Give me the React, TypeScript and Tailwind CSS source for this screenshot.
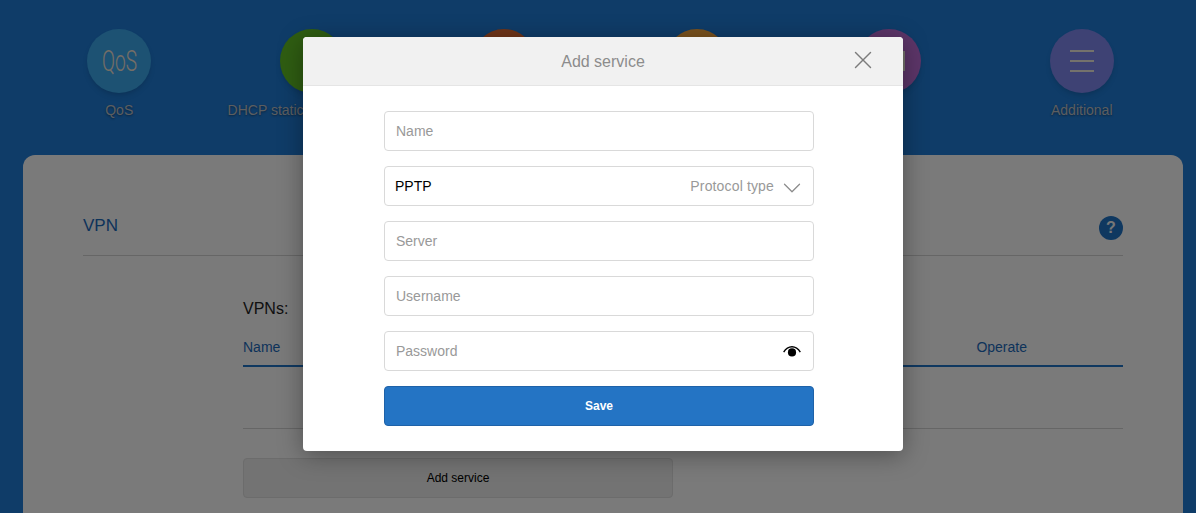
import { ChevronDown, X } from "lucide-react";

const font = "font-['Liberation_Sans',Arial,sans-serif]";

type NavItem = {
  label: string;
  color: string;
  icon?: React.ReactNode;
};

const navItems: NavItem[] = [
  {
    label: "QoS",
    color: "bg-[#3aa4e6]",
    icon: <span className="font-['Roboto',sans-serif] text-[29px] leading-none font-light text-[#e8dccc] scale-x-[0.66]">QoS</span>,
  },
  { label: "DHCP static IP assignment", color: "bg-[#5eba24]" },
  { label: "", color: "bg-[#de6830]" },
  { label: "", color: "bg-[#f4a43c]" },
  {
    label: "",
    color: "bg-[#b86ad0]",
    icon: <span className="h-5 w-8 border-2 border-[#e8e4d8]" />,
  },
  {
    label: "Additional",
    color: "bg-[#7c84e8]",
    icon: (
      <span className="flex w-6 flex-col gap-2">
        <span className="h-0.5 bg-[#e8e4d8]" />
        <span className="h-0.5 bg-[#e8e4d8]" />
        <span className="h-0.5 bg-[#e8e4d8]" />
      </span>
    ),
  },
];

function Field({ placeholder, children }: { placeholder: string; children?: React.ReactNode }) {
  return (
    <div className="flex h-10 items-center justify-between rounded border border-[#d9d9d9] bg-white pl-[11px] pr-[11px] text-sm text-[#999]">
      <span>{placeholder}</span>
      {children}
    </div>
  );
}

export default function App() {
  return (
    <div className={`relative h-[513px] w-[1196px] overflow-hidden bg-[#1e78d0] ${font}`}>
      <div className="grid w-[1178px] grid-cols-6 pl-[23px] pt-[29px]">
        {navItems.map((item, i) => (
          <div key={i} className="flex flex-col items-center">
            <div className={`flex h-16 w-16 items-center justify-center rounded-full shadow-md ${item.color}`}>
              {item.icon}
            </div>
            <span className="mt-[7px] h-5 text-sm whitespace-nowrap text-[#b8bcc0] [text-shadow:0_1px_2px_rgba(0,0,0,0.4)]">
              {item.label}
            </span>
          </div>
        ))}
      </div>

      <div className="ml-[23px] mt-[35px] h-[400px] w-[1160px] rounded-t-xl bg-[#f4f4f4] px-[60px]">
        <div className="flex h-[101px] justify-between border-b border-[#ccc] pt-[40px]">
          <h2 className="mt-[20px] text-[17px] leading-[22px] text-[#1a66b4]">VPN</h2>
          <span className="mt-[21px] flex h-6 w-6 items-center justify-center rounded-full bg-[#1e70c0] text-base font-bold text-[#eee]">?</span>
        </div>
        <div className="ml-[160px]">
          <p className="pt-[43px] text-base leading-[20px] text-[#222]">VPNs:</p>
          <div className="mt-[16px] flex h-[32px] justify-between border-b-2 border-[#1e70c0] pr-[96px] pt-[2px] text-sm text-[#1a66b4]">
            <span>Name</span>
            <span>Operate</span>
          </div>
          <div className="h-[62px] border-b border-[#ccc]" />
          <button className="mt-[29px] flex h-10 w-[430px] items-center justify-center rounded border border-[#d8d8d8] bg-[#e6e6e6] text-xs text-black">
            Add service
          </button>
        </div>
      </div>

      <div className="absolute inset-0 bg-black/50">
        <div className="absolute left-[303px] top-[37px] w-[600px] overflow-hidden rounded bg-white shadow-[0_4px_24px_rgba(0,0,0,0.35)]">
          <div className="relative flex h-[49px] items-center justify-center border-b border-[#e5e5e5] bg-[#f1f1f1] pt-[1px] text-base text-[#8c8c8c]">
            Add service
            <X className="absolute right-[25px] top-[8px] h-[30px] w-[30px] text-[#7c7c7c]" strokeWidth={1.1} />
          </div>
          <div className="ml-[81px] flex w-[430px] flex-col gap-[15px] pt-[25px] pb-[25px]">
            <Field placeholder="Name" />
            <div className="flex h-10 items-center rounded border border-[#d9d9d9] pl-[10px] pr-[6px] text-sm">
              <span className="text-black">PPTP</span>
              <span className="ml-auto tracking-[0.15px] text-[#999]">Protocol type</span>
              <ChevronDown className="ml-[3px] mt-[4px] h-[30px] w-[30px] text-[#8c8c8c]" strokeWidth={1} />
            </div>
            <Field placeholder="Server" />
            <Field placeholder="Username" />
            <Field placeholder="Password">
              <svg viewBox="0 0 20 14" className="h-[13px] w-[20px] text-black" fill="currentColor">
                <path d="M0.4 7.4C2.8 3.2 6.2 1 10 1s7.2 2.2 9.6 6.4l-1.3.7C16.2 4.6 13.4 2.8 10 2.8S3.8 4.6 1.7 8.1z" />
                <circle cx="10" cy="8" r="4.4" />
              </svg>
            </Field>
            <button className="flex h-10 items-center justify-center rounded border border-[#1f62a8] bg-[#2474c4] text-xs font-bold text-white">
              Save
            </button>
          </div>
        </div>
      </div>
    </div>
  );
}
